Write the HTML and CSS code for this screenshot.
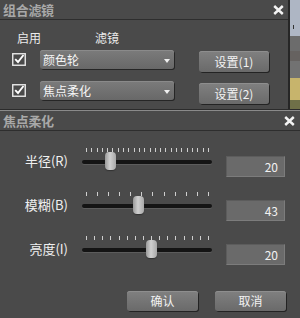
FILE: index.html
```html
<!DOCTYPE html>
<html lang="zh-CN">
<head>
<meta charset="utf-8">
<title>组合滤镜</title>
<link rel="stylesheet" href="styles.css">
</head>
<body>
<div class="screen">
  <div class="top">
    <section class="dlg dlg-filters">
      <header class="titlebar">
        <span class="title">组合滤镜</span>
        <svg class="close" width="11" height="10" viewBox="0 0 11 10"><path d="M1.2 1 L9.8 9 M9.8 1 L1.2 9" stroke="#f4f4f4" stroke-width="2.4" fill="none"/></svg>
      </header>
      <div class="cols">
        <span class="col-enable">启用</span>
        <span class="col-filter">滤镜</span>
      </div>
      <div class="frow">
        <svg class="check" width="14" height="13" viewBox="0 0 14 13"><rect x="0.75" y="0.75" width="12.5" height="11.5" fill="none" stroke="#e8e8e8" stroke-width="1.4"/><path d="M3.2 6.2 L6 9 L11.5 2" stroke="#fff" stroke-width="1.9" fill="none"/></svg>
        <div class="select"><span>颜色轮</span><i class="caret"></i></div>
        <button class="btn btn-set">设置(1)</button>
      </div>
      <div class="frow frow2">
        <svg class="check" width="14" height="13" viewBox="0 0 14 13"><rect x="0.75" y="0.75" width="12.5" height="11.5" fill="none" stroke="#e8e8e8" stroke-width="1.4"/><path d="M3.2 6.2 L6 9 L11.5 2" stroke="#fff" stroke-width="1.9" fill="none"/></svg>
        <div class="select"><span>焦点柔化</span><i class="caret"></i></div>
        <button class="btn btn-set">设置(2)</button>
      </div>
    </section>
    <aside class="strip">
      <div class="band b1"><i class="mark"></i></div>
      <div class="band b2"></div>
      <div class="band b3"></div>
      <div class="band b4"></div>
      <div class="band b5"></div>
      <div class="band b6"></div>
    </aside>
  </div>
  <section class="dlg dlg-focus">
    <header class="titlebar titlebar2">
      <span class="title">焦点柔化</span>
      <svg class="close close2" width="11" height="10" viewBox="0 0 11 10"><path d="M1.2 1 L9.8 9 M9.8 1 L1.2 9" stroke="#f4f4f4" stroke-width="2.4" fill="none"/></svg>
    </header>
    <div class="sliders">
      <div class="srow">
        <span class="label">半径(R)</span>
        <div class="slider">
          <div class="ticks t24"><i></i><i></i><i></i><i></i><i></i><i></i><i></i><i></i><i></i><i></i><i></i><i></i><i></i><i></i><i></i><i></i><i></i><i></i><i></i><i></i><i></i><i></i><i></i><i></i></div>
          <div class="track"></div>
          <div class="thumb" style="left:23px"></div>
        </div>
        <div class="value">20</div>
      </div>
      <div class="srow srow2">
        <span class="label">模糊(B)</span>
        <div class="slider">
          <div class="ticks"><i></i><i></i><i></i><i></i><i></i><i></i><i></i><i></i><i></i><i></i><i></i><i></i></div>
          <div class="track"></div>
          <div class="thumb" style="left:51px"></div>
        </div>
        <div class="value">43</div>
      </div>
      <div class="srow srow3">
        <span class="label">亮度(I)</span>
        <div class="slider">
          <div class="ticks"><i></i><i></i><i></i><i></i><i></i><i></i><i></i><i></i><i></i><i></i><i></i><i></i><i></i><i></i><i></i><i></i></div>
          <div class="track"></div>
          <div class="thumb" style="left:64px"></div>
        </div>
        <div class="value">20</div>
      </div>
    </div>
    <div class="actions">
      <button class="btn btn-act">确认</button>
      <button class="btn btn-act">取消</button>
    </div>
  </section>
</div>
</body>
</html>
```

FILE: styles.css
```css
* { box-sizing: border-box; }
html, body { margin: 0; padding: 0; }
body {
  width: 300px;
  height: 318px;
  overflow: hidden;
  background: #4a4a4a;
  font-family: "Noto Sans CJK SC", "Noto Sans", sans-serif;
  color: #efefef;
}
.screen { width: 300px; height: 318px; display: flex; flex-direction: column; }

.top {
  display: flex;
  height: 110px;
  flex: none;
  border-bottom: 1px solid #2b2b2b;
}
.dlg-filters {
  width: 290px;
  flex: none;
  border-right: 2px solid #262626;
  background: #4a4a4a;
}
.titlebar {
  height: 20px;
  border-bottom: 1px solid #2e2e2e;
  display: flex;
  align-items: center;
  justify-content: space-between;
  padding: 0 4px 0 3px;
}
.title {
  font-size: 13px;
  font-weight: bold;
  color: #a8a8a8;
  line-height: 16px;
  letter-spacing: -0.3px;
}
.close { display: block; }

.cols {
  margin-top: 10px;
  height: 16px;
  display: flex;
  font-size: 12px;
  line-height: 16px;
  color: #ececec;
}
.col-enable { margin-left: 17px; }
.col-filter { margin-left: 54px; }

.frow {
  margin-top: 4px;
  height: 22px;
  display: flex;
  align-items: flex-start;
}
.frow2 { margin-top: 9px; }
.check { margin: 3px 0 0 12px; display: block; flex: none; }
.select {
  margin-left: 14px;
  width: 134px;
  height: 19px;
  border-radius: 3px;
  background: linear-gradient(#7b7b7b, #686868);
  box-shadow: 1px 1px 0 #262626, inset 0 1px 0 #8a8a8a;
  display: flex;
  align-items: center;
  justify-content: space-between;
  padding: 0 4px 0 3px;
  font-size: 12px;
  line-height: 16px;
  color: #f6f6f6;
}
.caret {
  width: 0;
  height: 0;
  border-left: 3.5px solid transparent;
  border-right: 3.5px solid transparent;
  border-top: 4px solid #f0f0f0;
  margin-top: 2px;
}
.btn {
  font-family: "Noto Sans CJK SC", "Noto Sans", sans-serif;
  font-size: 12px;
  line-height: 16px;
  color: #f2f2f2;
  border: none;
  border-radius: 3px;
  background: linear-gradient(#808080, #6a6a6a);
  box-shadow: 1px 1px 0 #232323, inset 0 1px 0 #8e8e8e;
  padding: 0;
  display: flex;
  align-items: center;
  justify-content: center;
}
.btn-set {
  margin: 1px 0 0 25px;
  width: 70px;
  height: 21px;
}
.frow2 .btn-set { margin-top: 2px; }

.strip {
  flex: 1;
  display: flex;
  flex-direction: column;
}
.band { flex: none; }
.b1 { height: 36px; background: #aeb6c4; position: relative; }
.mark { position: absolute; left: 3px; top: 25px; width: 1px; height: 4px; background: #333; }
.b2 { height: 15px; background: #6c6c6c; }
.b3 { height: 10px; background: #666260; }
.b4 { height: 17px; background: #727272; }
.b5 { height: 22px; background: #c7b46c; }
.b6 { flex: 1; background: #6f7048; }

.dlg-focus {
  flex: 1;
  border-top: 1px solid #8a8a8a;
}
.titlebar2 { padding-right: 5px; }

.sliders { padding-top: 17px; }
.srow {
  display: grid;
  grid-template-columns: 68px 130px 59px;
  column-gap: 14px;
  align-items: start;
  height: 44px;
}
.srow3 { height: 45px; }
.label {
  text-align: right;
  font-size: 13px;
  line-height: 16px;
  margin-top: 5px;
  color: #f0f0f0;
}
.slider { position: relative; height: 24px; }
.ticks {
  display: flex;
  justify-content: space-between;
  padding: 0 3px 0 4px;
  height: 4px;
}
.ticks i {
  display: block;
  width: 1px;
  height: 4px;
  background: #cfcfcf;
}
.track {
  margin-top: 8px;
  height: 4px;
  border-radius: 2px;
  background: #141414;
  box-shadow: 0 1px 0 #5c5c5c;
}
.thumb {
  position: absolute;
  top: 4px;
  width: 11px;
  height: 18px;
  border-radius: 4px;
  background: linear-gradient(90deg, #9a9a9a, #cfcfcf 45%, #a8a8a8);
  box-shadow: 0 1px 1px #333;
}
.value {
  margin-top: 8px;
  height: 21px;
  background: #6a6a6a;
  border-top: 1px solid #5c5c5c;
  border-left: 1px solid #5c5c5c;
  border-bottom: 1px solid #7c7c7c;
  border-right: 1px solid #7c7c7c;
  text-align: right;
  padding-right: 6px;
  font-size: 12px;
  line-height: 19px;
  color: #f2f2f2;
}

.actions {
  margin-top: 10px;
  display: flex;
  justify-content: flex-end;
  gap: 17px;
  padding-right: 14px;
}
.btn-act { width: 71px; height: 20px; }
```
